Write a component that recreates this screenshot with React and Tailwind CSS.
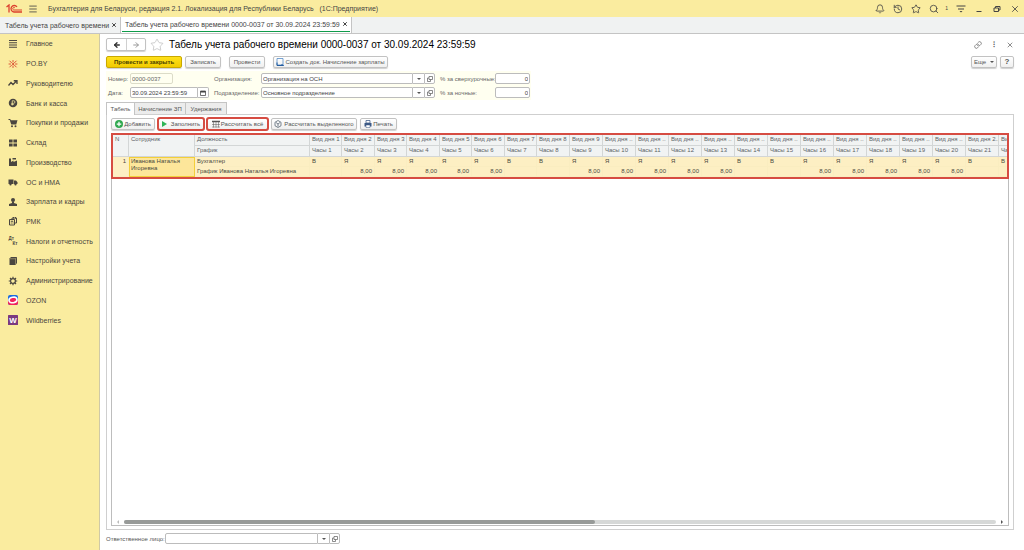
import React from 'react';
import { Bell, History, Star, Search, X, Link, ArrowLeft, ArrowRight, Menu } from 'lucide-react';

// Sections of the left menu, each with its own small drawing
const sections = [
  {
    name: 'Главное',
    icon: <path d="M2 3h16M2 7.500h16M2 12h16M2 16.500h16" stroke="currentColor" strokeWidth="2.400" />,
  },
  {
    name: 'PO.BY',
    icon: (
      <g stroke="#d8432b" strokeWidth="1.800" strokeLinecap="round">
        <path d="M10 3v3M10 14v3M2 10h3M15 10h3M3.500 4l3.500 3.500M16.500 4L13 7.500M3.500 16L7 12.500M16.500 16L13 12.500" />
        <circle cx="10" cy="10" r="1.200" fill="#d8432b" />
      </g>
    ),
  },
  {
    name: 'Руководителю',
    icon: <path d="M1 15l5-6 4 4 7-7M11.500 5.500H18V12" fill="none" stroke="currentColor" strokeWidth="2.600" />,
  },
  {
    name: 'Банк и касса',
    icon: (
      <g>
        <circle cx="10" cy="10" r="8.500" fill="currentColor" />
        <path d="M8.500 15V5.500h2.800a2.600 2.600 0 010 5.200H6.500M6.500 13h5" fill="none" stroke="#faec9f" strokeWidth="1.500" />
      </g>
    ),
  },
  {
    name: 'Покупки и продажи',
    icon: (
      <g fill="currentColor">
        <path d="M1 2h3.500l1 2.500H19L16.500 13H6.500L3.500 4H1z" />
        <circle cx="8" cy="16.500" r="2" />
        <circle cx="15" cy="16.500" r="2" />
      </g>
    ),
  },
  {
    name: 'Склад',
    icon: <path d="M2 3h7.200v6.200H2zM10.800 3H18v6.200h-7.200zM2 10.800h7.200V17H2zM10.800 10.800H18V17h-7.200z" fill="currentColor" />,
  },
  {
    name: 'Производство',
    icon: <path d="M2 18V3h4v7l5-3v3l7-3v11zM9 2h7v3H9z" fill="currentColor" />,
  },
  {
    name: 'ОС и НМА',
    icon: (
      <g fill="currentColor">
        <path d="M1 5h10v9H1zM12 7h4l3 3.500V14h-7z" />
        <circle cx="5" cy="15" r="2.200" />
        <circle cx="15" cy="15" r="2.200" />
      </g>
    ),
  },
  {
    name: 'Зарплата и кадры',
    icon: (
      <g fill="currentColor">
        <circle cx="10" cy="6" r="4" />
        <path d="M8 9h4v3l6 2v4H2v-4l6-2z" />
      </g>
    ),
  },
  {
    name: 'РМК',
    icon: (
      <g fill="none" stroke="currentColor" strokeWidth="2">
        <path d="M3 7h10v11H3zM8 7V4h9v10h-3M11 2v3M15 2v3" />
        <path d="M5.500 10.500h5M5.500 14h2M9 14h2" />
      </g>
    ),
  },
  {
    name: 'Налоги и отчетность',
    icon: (
      <g fill="currentColor" fontFamily="Liberation Sans, sans-serif" fontSize="9" fontWeight="700">
        <text x="1" y="8">Дт</text>
        <text x="9" y="18">Кт</text>
      </g>
    ),
  },
  {
    name: 'Настройки учета',
    icon: (
      <g>
        <path d="M3 5l3-3h12v12l-3 4H3z" fill="currentColor" />
        <path d="M4 5.500h11V17M15 5.500L17.500 3" fill="none" stroke="#faec9f" strokeWidth="0.800" />
      </g>
    ),
  },
  {
    name: 'Администрирование',
    icon: (
      <g fill="none" stroke="currentColor">
        <circle cx="10" cy="10" r="4.800" strokeWidth="2.400" />
        <path d="M10 1.500V5M10 15v3.500M1.500 10H5M15 10h3.500M4 4l2.500 2.500M13.500 13.500L16 16M16 4l-2.500 2.500M6.500 13.500L4 16" strokeWidth="2.400" />
      </g>
    ),
  },
  {
    name: 'OZON',
    icon: (
      <g>
        <rect width="20" height="20" rx="4" fill="#1b6be0" />
        <path d="M0 11C5 16 14 16 20 9v7a4 4 0 01-4 4H4a4 4 0 01-4-4z" fill="#f2245c" />
        <ellipse cx="10" cy="10" rx="8" ry="5.500" transform="rotate(-12 10 10)" fill="#f2245c" stroke="#fff" strokeWidth="3.200" />
      </g>
    ),
  },
  {
    name: 'Wildberries',
    icon: (
      <g>
        <rect width="20" height="20" rx="1" fill="#7b3a80" />
        <text x="10" y="16" textAnchor="middle" fontFamily="Liberation Sans, sans-serif" fontSize="16" fontWeight="700" fill="#fff">W</text>
      </g>
    ),
  },
];

// One entry per calendar day; `kind` is Я (worked) or В (day off)
const kinds = ['В', 'Я', 'Я', 'Я', 'Я', 'Я', 'В', 'В', 'Я', 'Я', 'Я', 'Я', 'Я', 'В', 'В', 'Я', 'Я', 'Я', 'Я', 'Я', 'В', 'В'];
const days = kinds.map((kind, i) => ({
  number: i + 1,
  kind,
  title: i < 9 ? `Вид дня ${i + 1}` : i >= 20 ? 'Вид дня 2..' : 'Вид дня ..',
  hours: kind === 'Я' ? '8,00' : '',
}));

const buttonBase = 'flex items-center justify-center h-3 rounded-xs border border-[#c2c2c2] bg-linear-to-b from-white to-[#f0f0f0] shadow-[0_1px_1px_#d0d0d0] text-[#555] whitespace-nowrap';
const fieldBase = 'h-[11px] min-w-0 border border-[#bcbcbc] bg-white text-[#444] outline-none';

const OpenIcon = () => (
  <svg className="w-[6px] h-[6px]" viewBox="0 0 12 12" fill="none" stroke="#666" strokeWidth="1.500">
    <path d="M4 1h7v6H4zM4 4H1v7h6V7" />
  </svg>
);

const Caret = () => (
  <svg className="w-1 h-1" viewBox="0 0 8 8"><path d="M0 2h8L4 6z" fill="#555" /></svg>
);

// Text box with a list button and an open button at its right
const Lookup = ({ id, value }) => (
  <div className="flex">
    <input id={id} defaultValue={value} className={`${fieldBase} w-[153px] rounded-l-xs px-px`} />
    <button aria-label="Выбрать" className="flex items-center justify-center w-[11px] h-[11px] border-y border-[#bcbcbc] bg-white"><Caret /></button>
    <button aria-label="Открыть" className="flex items-center justify-center w-[11px] h-[11px] border border-[#bcbcbc] rounded-r-xs bg-white"><OpenIcon /></button>
  </div>
);

const TitleBar = () => (
  <header className="flex items-center h-[17px] pl-1.5 pr-1 bg-[#faec9f] text-[7px] text-[#444]">
    <svg className="w-4 h-[9px]" viewBox="0 0 32 18" fill="none" stroke="#dc3f2e" strokeWidth="2.600">
      <path d="M1 6l5-4v15" />
      <path d="M22 6a6.500 6.500 0 10-6 10h16" />
      <path d="M18 8a2.500 2.500 0 10-2 4h16" strokeWidth="2" />
    </svg>
    <button aria-label="Меню" className="ml-1.5"><Menu className="w-2.5 h-2.5" strokeWidth={2} /></button>
    <span className="ml-2.5 whitespace-pre">Бухгалтерия для Беларуси, редакция 2.1. Локализация для Республики Беларусь   (1С:Предприятие)</span>
    <div className="flex items-center gap-2 ml-auto">
      <button aria-label="Уведомления"><Bell className="w-2.5 h-2.5" /></button>
      <button aria-label="История"><History className="w-2.5 h-2.5" /></button>
      <button aria-label="Избранное"><Star className="w-2.5 h-2.5" /></button>
      <div className="flex items-center gap-1.5">
        <button aria-label="Поиск"><Search className="w-2.5 h-2.5" /></button>
        <span className="text-[5px]">1</span>
      </div>
      <button aria-label="Настройки">
        <svg className="w-2.5 h-2.5" viewBox="0 0 20 20" stroke="currentColor" strokeWidth="2"><path d="M1 4h18M4 10h12" /><path d="M7 14h6l-3 3z" fill="currentColor" stroke="none" /></svg>
      </button>
      <button aria-label="Свернуть">
        <svg className="w-2.5 h-2.5" viewBox="0 0 20 20" stroke="currentColor" strokeWidth="2"><path d="M5 15h10" /></svg>
      </button>
      <button aria-label="Развернуть">
        <svg className="w-2.5 h-2.5" viewBox="0 0 20 20" fill="none" stroke="currentColor" strokeWidth="2"><path d="M4 8h9v7H4zM7 8V5h9v7h-3" /></svg>
      </button>
      <button aria-label="Закрыть"><X className="w-2.5 h-2.5" /></button>
    </div>
  </header>
);

const WindowTabs = () => (
  <div className="flex h-[17px] bg-[#f0f2f2] border-b border-[#c4c4c4] text-[7px] text-[#444]">
    <div className="flex items-center gap-0.5 w-[121px] pl-[5px] whitespace-nowrap border-r border-[#c4c4c4]">
      <button>Табель учета рабочего времени</button>
      <button aria-label="Закрыть вкладку"><X className="w-1.5 h-1.5" strokeWidth={4} /></button>
    </div>
    <div className="px-px bg-white border-r border-[#c4c4c4]">
      <div className="flex items-center gap-0.5 h-[15px] pl-[3px] pr-0.5 whitespace-nowrap border-b border-[#0f9b4a]">
        <button>Табель учета рабочего времени 0000-0037 от 30.09.2024 23:59:59</button>
        <button aria-label="Закрыть вкладку"><X className="w-1.5 h-1.5" strokeWidth={4} /></button>
      </div>
    </div>
  </div>
);

const Sidebar = () => (
  <aside className="w-[100px] shrink-0 bg-[#faec9f] border-r border-[#cfc9a6]">
    <nav className="flex flex-col justify-between h-[296px]">
      {sections.map((item) => (
        <a key={item.name} href="#" className="flex items-center gap-2 h-5 pl-2 text-[7px] text-[#4a4640] whitespace-nowrap">
          <svg className="w-2.5 h-2.5" viewBox="0 0 20 20">{item.icon}</svg>
          {item.name}
        </a>
      ))}
    </nav>
  </aside>
);

const HeaderForm = () => (
  <div className="flex gap-[5px] w-[425px] px-0.5 py-0.5 bg-[#fffff0] text-[#666]">
    <div className="grid grid-cols-[22px_79px] gap-y-[3px] items-center">
      <label htmlFor="number">Номер:</label>
      <input id="number" defaultValue="0000-0037" className="h-[11px] w-[43px] px-px rounded-xs border border-[#dcdcc8] bg-transparent" />
      <label htmlFor="date">Дата:</label>
      <div className="flex">
        <input id="date" defaultValue="30.09.2024 23:59:59" className={`${fieldBase} w-[69px] rounded-l-xs px-px`} />
        <button aria-label="Календарь" className="flex items-center justify-center w-[11px] h-[11px] border border-l-0 border-[#bcbcbc] rounded-r-xs bg-white">
          <svg className="w-[6px] h-[6px]" viewBox="0 0 12 12" fill="none" stroke="#444"><path d="M1 2h10v9H1z" strokeWidth="1.500" /><path d="M1 3.500h10" strokeWidth="3" /></svg>
        </button>
      </div>
    </div>
    <div className="grid grid-cols-[47px_174px] gap-y-[3px] items-center">
      <label htmlFor="org">Организация:</label>
      <Lookup id="org" value="Организация на ОСН" />
      <label htmlFor="dept">Подразделение:</label>
      <Lookup id="dept" value="Основное подразделение" />
    </div>
    <div className="grid grid-cols-[55px_35px] gap-y-[3px] items-center whitespace-nowrap">
      <label htmlFor="overtime">% за сверхурочные:</label>
      <input id="overtime" defaultValue="0" className={`${fieldBase} w-full rounded-xs px-px text-right`} />
      <label htmlFor="night">% за ночные:</label>
      <input id="night" defaultValue="0" className={`${fieldBase} w-full rounded-xs px-px text-right`} />
    </div>
  </div>
);

const TableToolbar = () => (
  <div className="flex gap-[3px] mb-[3px]">
    <button className={`${buttonBase} w-11 gap-px`}>
      <svg className="w-2 h-2" viewBox="0 0 16 16"><circle cx="8" cy="8" r="8" fill="#2fa84f" /><path d="M8 3.500v9M3.500 8h9" stroke="#fff" strokeWidth="2.500" /></svg>
      Добавить
    </button>
    <button className={`${buttonBase} w-[46px] gap-1 outline-2 -outline-offset-1 outline-[#d64c42]`}>
      <svg className="w-[5px] h-1.5" viewBox="0 0 10 12"><path d="M0 0l10 6-10 6z" fill="#2fb457" /></svg>
      Заполнить
    </button>
    <button className={`${buttonBase} w-[61px] gap-px outline-2 -outline-offset-1 outline-[#d64c42]`}>
      <svg className="w-2 h-2" viewBox="0 0 16 16" fill="none" stroke="#555"><path d="M0 3h16" strokeWidth="3" /><path d="M0 9h16M0 14h16M3 2v13M8 2v13M13 2v13" strokeWidth="1" /></svg>
      Рассчитать всё
    </button>
    <button className={`${buttonBase} w-[86px] gap-0.5`}>
      <svg className="w-2 h-2" viewBox="0 0 16 16" fill="none" stroke="#4d5c6b" strokeWidth="1.500"><path d="M8 1l6 3.500v7L8 15l-6-3.500v-7zM4 5l4 3 4-3M8 8v5" /></svg>
      Рассчитать выделенного
    </button>
    <button className={`${buttonBase} w-[37px] gap-px`}>
      <svg className="w-2 h-2" viewBox="0 0 16 16"><path d="M4 1h8v5H4z" fill="#fff" stroke="#3c5a86" strokeWidth="1.500" /><path d="M1 6h14v7H1z" fill="#3c5a86" /><path d="M4 10h8v5H4z" fill="#fff" stroke="#3c5a86" /></svg>
      Печать
    </button>
  </div>
);

const headCell = 'border-r border-b border-[#d3d6d6] bg-[#f1f3f3] font-normal text-left align-top px-0.5 pt-px whitespace-nowrap overflow-hidden';
const bodyCell = 'border-r border-b border-[#faedc0] bg-[#fdefc3] px-0.5 pt-px align-top whitespace-nowrap overflow-hidden';

const Timesheet = () => (
  <div className="-m-px overflow-hidden border-2 border-[#d64c42]">
    <table className="table-fixed w-[917px] border-separate border-spacing-0 leading-[7px] text-[#5c6266]">
      <colgroup>
        <col className="w-4" />
        <col className="w-[66px]" />
        <col className="w-[115px]" />
        {days.map((day) => (
          <col key={day.number} className={day.number < 9 && day.number % 2 === 1 ? 'w-8' : 'w-[33px]'} />
        ))}
      </colgroup>
      <thead>
        <tr className="h-[11px]">
          <th rowSpan={2} className={headCell}>N</th>
          <th rowSpan={2} className={headCell}>Сотрудник</th>
          <th className={headCell}>Должность</th>
          {days.map((day) => <th key={day.number} className={headCell}>{day.title}</th>)}
        </tr>
        <tr className="h-[11px]">
          <th className={headCell}>График</th>
          {days.map((day) => <th key={day.number} className={headCell}>Часы {day.number}</th>)}
        </tr>
      </thead>
      <tbody className="text-[#4a4a40]">
        <tr className="h-[10px]">
          <td rowSpan={2} className={`${bodyCell} text-right`}>1</td>
          <td rowSpan={2} className="border border-[#f3cf3a] bg-[#fde69a] px-px align-top">Иванова Наталья Игоревна</td>
          <td className={bodyCell}>Бухгалтер</td>
          {days.map((day) => <td key={day.number} className={bodyCell}>{day.kind}</td>)}
        </tr>
        <tr className="h-[10px]">
          <td className={bodyCell}>График Иванова Наталья Игоревна</td>
          {days.map((day) => <td key={day.number} className={`${bodyCell} text-right`}>{day.hours}</td>)}
        </tr>
      </tbody>
    </table>
  </div>
);

const App = () => (
  <div className="flex flex-col min-h-screen bg-white font-['Liberation_Sans',Arial,sans-serif] text-[6px] leading-none">
    <TitleBar />
    <WindowTabs />
    <div className="flex flex-1">
      <Sidebar />
      <main className="flex flex-col flex-1 min-w-0 pl-1.5 pr-2.5 pt-1 pb-1.5">
        {/* Document caption */}
        <div className="flex items-center h-[13px]">
          <div className="flex h-[13px] border border-[#c2c2c2] rounded-xs shadow-[0_1px_1px_#d0d0d0]">
            <button aria-label="Назад" className="flex items-center justify-center w-5 border-r border-[#d0d0d0]"><ArrowLeft className="w-2 h-2 text-[#333]" strokeWidth={4} /></button>
            <button aria-label="Вперед" className="flex items-center justify-center w-[18px]"><ArrowRight className="w-2 h-2 text-[#999]" strokeWidth={3} /></button>
          </div>
          <button aria-label="В избранное" className="ml-1"><Star className="w-3.5 h-3.5 text-[#aaa]" strokeWidth={1} /></button>
          <h1 className="ml-[5px] text-[10px] text-black whitespace-nowrap">Табель учета рабочего времени 0000-0037 от 30.09.2024 23:59:59</h1>
          <div className="flex items-center gap-2 ml-auto text-[#555]">
            <button aria-label="Ссылка"><Link className="w-2 h-2" /></button>
            <button aria-label="Действия" className="w-2 text-[8px] font-bold">⁝</button>
            <button aria-label="Закрыть"><X className="w-2 h-2" /></button>
          </div>
        </div>

        {/* Commands */}
        <div className="flex items-center mt-[5px]">
          <button className="h-3 w-[76px] rounded-xs border border-[#c9a800] bg-linear-to-b from-[#ffe11a] to-[#f2cb00] shadow-[0_1px_1px_#d0d0d0] font-bold text-[#4a3f00] whitespace-nowrap">Провести и закрыть</button>
          <button className={`${buttonBase} ml-[3px] w-9`}>Записать</button>
          <button className={`${buttonBase} ml-2 w-9`}>Провести</button>
          <button className={`${buttonBase} ml-2 w-[115px] gap-px`}>
            <svg className="w-2 h-2" viewBox="0 0 16 16" fill="none"><path d="M2 1h12v13H2z" stroke="#4b86c4" strokeWidth="1.500" /><path d="M2 9v6h13M11 12l3 3M8 15h7" stroke="#245c9e" strokeWidth="2" /></svg>
            Создать док. Начисление зарплаты
          </button>
          <button className={`${buttonBase} ml-auto w-[26px] gap-1`}>Еще <Caret /></button>
          <button className={`${buttonBase} ml-[3px] w-3.5 text-[8px] font-bold`}>?</button>
        </div>

        <div className="mt-[3px]"><HeaderForm /></div>

        {/* Page tabs */}
        <div className="flex h-3 mt-0.5 text-[#555]" role="tablist">
          <button role="tab" aria-selected="true" className="relative w-[29px] h-[13px] border border-b-0 border-[#c4c4c4] bg-white">Табель</button>
          <button role="tab" aria-selected="false" className="w-[51px] border-t border-r border-[#c4c4c4] bg-[#ececec]">Начисление ЗП</button>
          <button role="tab" aria-selected="false" className="w-[41px] border-t border-r border-[#c4c4c4] bg-[#ececec]">Удержания</button>
        </div>
        <section className="flex flex-col flex-1 border border-[#cfcfcf] px-1 pt-[3px] pb-[3px]">
          <TableToolbar />
          <div className="flex flex-col flex-1 min-w-0 border border-[#bdbdbd]">
            <Timesheet />
            <div className="flex items-center gap-1 mt-auto h-1.5 px-1">
              <svg className="w-1 h-1" viewBox="0 0 8 8"><path d="M6 0v8L2 4z" fill="#bbb" /></svg>
              <div className="flex-1 h-1 rounded-full bg-[#d6d8d7]">
                <div className="w-[54%] h-1 rounded-full bg-[#979a98]"></div>
              </div>
              <svg className="w-1 h-1" viewBox="0 0 8 8"><path d="M2 0v8l4-4z" fill="#555" /></svg>
            </div>
          </div>
        </section>

        <div className="flex items-center mt-[3px] text-[#555]">
          <label htmlFor="responsible" className="w-[59px]">Ответственное лицо:</label>
          <Lookup id="responsible" value="" />
        </div>
      </main>
    </div>
  </div>
);

export default App;
